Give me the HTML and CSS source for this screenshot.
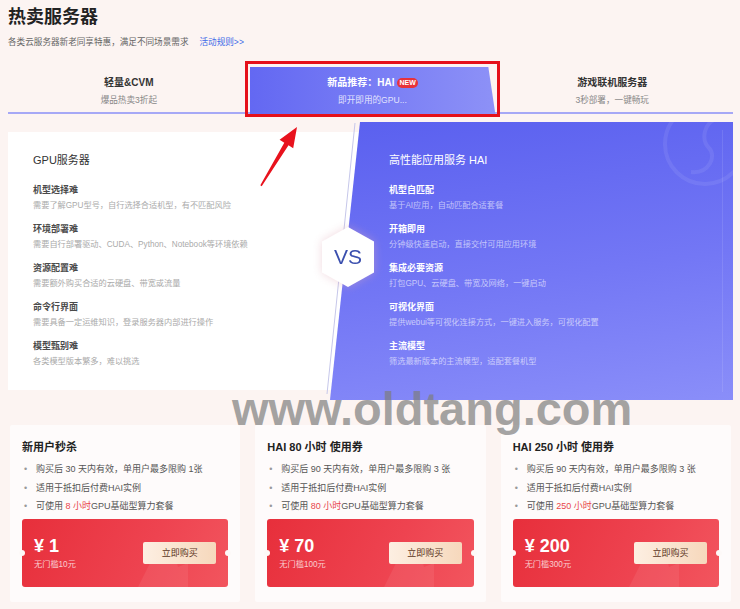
FILE: index.html
```html
<!DOCTYPE html>
<html lang="zh-CN">
<head>
<meta charset="utf-8">
<title>热卖服务器</title>
<link rel="stylesheet" href="styles.css">
</head>
<body>
<div class="page">
  <header class="head">
    <h1 class="title">热卖服务器</h1>
    <p class="subtitle">各类云服务器新老同享特惠，满足不同场景需求<a class="rule">活动规则&gt;&gt;</a></p>
  </header>

  <nav class="tabs">
    <div class="tab">
      <div class="tab-title">轻量&amp;CVM</div>
      <div class="tab-sub">爆品热卖3折起</div>
    </div>
    <div class="tab tab-active">
      <div class="tab-title">新品推荐：HAI<span class="badge">NEW</span></div>
      <div class="tab-sub">即开即用的GPU...</div>
    </div>
    <div class="tab">
      <div class="tab-title">游戏联机服务器</div>
      <div class="tab-sub">3秒部署，一键畅玩</div>
    </div>
  </nav>

  <section class="compare">
    <div class="panel panel-left">
      <div class="panel-h">GPU服务器</div>
      <ul class="items">
        <li><div class="item-t">机型选择难</div><div class="item-d">需要了解GPU型号，自行选择合适机型，有不匹配风险</div></li>
        <li><div class="item-t">环境部署难</div><div class="item-d">需要自行部署驱动、CUDA、Python、Notebook等环境依赖</div></li>
        <li><div class="item-t">资源配置难</div><div class="item-d">需要额外购买合适的云硬盘、带宽或流量</div></li>
        <li><div class="item-t">命令行界面</div><div class="item-d">需要具备一定运维知识，登录服务器内部进行操作</div></li>
        <li><div class="item-t">模型甄别难</div><div class="item-d">各类模型版本繁多，难以挑选</div></li>
      </ul>
    </div>
    <div class="panel panel-right">
      <svg class="ring" viewBox="0 0 90 80" width="90" height="80">
        <circle cx="62" cy="22" r="40" fill="none" stroke="rgba(255,255,255,0.08)" stroke-width="4"/>
        <path d="M76 -4 C 60 0, 58 18, 66 26 C 74 34, 66 52, 48 50" fill="none" stroke="rgba(255,255,255,0.08)" stroke-width="4"/>
      </svg>
      <div class="panel-h">高性能应用服务 HAI</div>
      <ul class="items">
        <li><div class="item-t">机型自匹配</div><div class="item-d">基于AI应用，自动匹配合适套餐</div></li>
        <li><div class="item-t">开箱即用</div><div class="item-d">分钟级快速启动，直接交付可用应用环境</div></li>
        <li><div class="item-t">集成必要资源</div><div class="item-d">打包GPU、云硬盘、带宽及网络，一键启动</div></li>
        <li><div class="item-t">可视化界面</div><div class="item-d">提供webui等可视化连接方式，一键进入服务，可视化配置</div></li>
        <li><div class="item-t">主流模型</div><div class="item-d">筛选最新版本的主流模型，适配套餐机型</div></li>
      </ul>
    </div>
    <svg class="edge-line" width="60" height="278" viewBox="0 0 60 278">
      <line x1="47" y1="1" x2="19" y2="272" stroke="#c6c7ea" stroke-width="1"/>
    </svg>
    <div class="vs-wrap"><div class="vs">VS</div></div>
  </section>

  <section class="cards">
    <div class="card">
      <div class="card-t">新用户秒杀</div>
      <ul class="bullets">
        <li>购买后 30 天内有效，单用户最多限购 1张</li>
        <li>适用于抵扣后付费HAI实例</li>
        <li>可使用 <span class="hl">8 小时</span>GPU基础型算力套餐</li>
      </ul>
      <div class="coupon">
        <svg class="deco" width="60" height="50" viewBox="0 0 60 50"><path d="M10 50 L28 14 L34 22 L44 4 L50 30 L60 26 L60 50 Z" fill="rgba(255,255,255,0.07)"/></svg>
        <div class="price-box">
          <div class="price">¥ 1</div>
          <div class="cond">无门槛10元</div>
        </div>
        <div class="buy">立即购买</div>
      </div>
    </div>
    <div class="card">
      <div class="card-t">HAI 80 小时 使用券</div>
      <ul class="bullets">
        <li>购买后 90 天内有效，单用户最多限购 3 张</li>
        <li>适用于抵扣后付费HAI实例</li>
        <li>可使用 <span class="hl">80 小时</span>GPU基础型算力套餐</li>
      </ul>
      <div class="coupon">
        <svg class="deco" width="60" height="50" viewBox="0 0 60 50"><path d="M10 50 L28 14 L34 22 L44 4 L50 30 L60 26 L60 50 Z" fill="rgba(255,255,255,0.07)"/></svg>
        <div class="price-box">
          <div class="price">¥ 70</div>
          <div class="cond">无门槛100元</div>
        </div>
        <div class="buy">立即购买</div>
      </div>
    </div>
    <div class="card">
      <div class="card-t">HAI 250 小时 使用券</div>
      <ul class="bullets">
        <li>购买后 90 天内有效，单用户最多限购 3 张</li>
        <li>适用于抵扣后付费HAI实例</li>
        <li>可使用 <span class="hl">250 小时</span>GPU基础型算力套餐</li>
      </ul>
      <div class="coupon">
        <svg class="deco" width="60" height="50" viewBox="0 0 60 50"><path d="M10 50 L28 14 L34 22 L44 4 L50 30 L60 26 L60 50 Z" fill="rgba(255,255,255,0.07)"/></svg>
        <div class="price-box">
          <div class="price">¥ 200</div>
          <div class="cond">无门槛300元</div>
        </div>
        <div class="buy">立即购买</div>
      </div>
    </div>
  </section>

  <div class="watermark">www.oldtang.com</div>
  <div class="annot-box"></div>
  <svg class="annot-arrow" width="740" height="609" viewBox="0 0 740 609">
    <polygon points="297,127 279.6,139.8 284.3,142.7 260.3,185.3 261.7,186.2 288.5,145.3 293.2,148.2" fill="#e8121d"/>
  </svg>
</div>
</body>
</html>
```

FILE: styles.css
```css
* { box-sizing: border-box; }

body {
  margin: 0;
  background: #fcf4f2;
  font-family: "Liberation Sans", "Noto Sans CJK SC", sans-serif;
  color: #333;
}

.page {
  position: relative;
  width: 740px;
  height: 609px;
  padding: 0 7px 0 8px;
  overflow: hidden;
}

/* header */
.title {
  margin: 0;
  padding-top: 6px;
  font-size: 18px;
  line-height: 22px;
  font-weight: 700;
  color: #222;
}
.subtitle {
  margin: 8px 0 0;
  font-size: 8.6px;
  line-height: 12px;
  color: #666;
}
.rule {
  margin-left: 11px;
  color: #3d6ae8;
}

/* tabs */
.tabs {
  display: grid;
  grid-template-columns: repeat(3, 1fr);
  margin-top: 16px;
  height: 50px;
  border-bottom: 2px solid #a6a8f6;
}
.tab {
  text-align: center;
  padding-top: 11px;
}
.tab-title {
  font-size: 10px;
  line-height: 16px;
  font-weight: 700;
  color: #333;
}
.tab-sub {
  margin-top: 3px;
  font-size: 8.6px;
  line-height: 12px;
  color: #888;
}
.tab-active {
  margin: 3px -4px -2px 0;
  padding-top: 8px;
  background: linear-gradient(90deg, #6368f2 0%, #8d91f7 100%);
  clip-path: polygon(0 0, calc(100% - 7px) 0, 100% 100%, 0 100%);
}
.tab-active .tab-title { color: #fff; }
.tab-active .tab-sub { color: rgba(255, 255, 255, 0.8); }
.badge {
  display: inline-block;
  margin-left: 3px;
  padding: 0 2px;
  border-radius: 5px;
  background: #e8323a;
  color: #fff;
  font-size: 7px;
  line-height: 10px;
  font-weight: 700;
  vertical-align: 1px;
}

/* compare */
.compare {
  position: relative;
  display: flex;
  margin-top: 8px;
  height: 278px;
}
.panel-left {
  width: 352px;
  flex: none;
  margin: 10px 0;
  padding: 20px 0 0 25px;
  background: #fff;
}
.panel-right {
  position: relative;
  flex: 1;
  margin-left: -30px;
  padding: 30px 0 0 59px;
  background: linear-gradient(172deg, #5a60ef 0%, #7377f5 55%, #8a8ef9 100%);
  clip-path: polygon(30px 0, 100% 0, 100% 100%, 0 100%);
  color: #fff;
}
.panel-right::after {
  content: "";
  position: absolute;
  left: 40px;
  right: 10px;
  top: 8px;
  bottom: 8px;
  border-right: 1px solid rgba(255, 255, 255, 0.1);
}
.ring {
  position: absolute;
  right: 0;
  top: 0;
}
.panel-h {
  font-size: 11px;
  line-height: 16px;
  color: #333;
}
.panel-right .panel-h { color: #fff; }
.items {
  margin: 15px 0 0;
  padding: 0;
  list-style: none;
  display: flex;
  flex-direction: column;
  gap: 10px;
}
.item-t {
  font-size: 9px;
  line-height: 14px;
  font-weight: 700;
  color: #4a4a4a;
}
.item-d {
  margin-top: 3px;
  font-size: 8.2px;
  line-height: 12px;
  color: #aaa;
}
.panel-right .item-t { color: #fff; }
.panel-right .item-d { color: rgba(255, 255, 255, 0.6); }

.edge-line {
  position: absolute;
  left: 300px;
  top: 0;
}
.vs-wrap {
  position: absolute;
  left: 314px;
  top: 105px;
  filter: drop-shadow(0 0 5px rgba(225, 170, 185, 0.45));
}
.vs {
  width: 52px;
  height: 60px;
  background: #fff;
  clip-path: polygon(50% 0, 100% 24%, 100% 76%, 50% 100%, 0 76%, 0 24%);
  display: flex;
  align-items: center;
  justify-content: center;
  font-size: 21px;
  color: #3a4fae;
  font-family: "Liberation Sans", sans-serif;
}

/* cards */
.cards {
  display: grid;
  grid-template-columns: repeat(3, 1fr);
  gap: 15px;
  margin-top: 25px;
  padding: 0 2px;
}
.card {
  height: 177px;
  padding: 13px 12px 0;
  background: rgba(255, 255, 255, 0.65);
  border-radius: 2px;
}
.card-t {
  font-size: 11px;
  line-height: 18px;
  font-weight: 700;
  color: #222;
}
.bullets {
  margin: 4px 0 0;
  padding: 0;
  list-style: none;
}
.bullets li {
  position: relative;
  padding-left: 14px;
  font-size: 9px;
  line-height: 18.5px;
  color: #555;
}
.bullets li::before {
  content: "•";
  position: absolute;
  left: 2px;
  color: #999;
}
.hl { color: #e8454a; }

.coupon {
  position: relative;
  margin-top: 3px;
  height: 68px;
  padding: 0 12px;
  display: flex;
  align-items: center;
  justify-content: space-between;
  border-radius: 3px;
  background: linear-gradient(115deg, #e72f3b 0%, #ee4350 60%, #f2555e 100%);
}
.coupon::before,
.coupon::after {
  content: "";
  position: absolute;
  top: 50%;
  width: 6px;
  height: 6px;
  margin-top: -3px;
  border-radius: 50%;
  background: #fdf9f8;
}
.coupon::before { left: -3px; }
.coupon::after { right: -3px; }
.deco {
  position: absolute;
  right: 40px;
  bottom: 0;
}
.price-box { position: relative; }
.price {
  font-size: 18px;
  line-height: 22px;
  font-weight: 700;
  color: #fff;
}
.cond {
  margin-top: 2px;
  font-size: 8.2px;
  line-height: 12px;
  color: rgba(255, 255, 255, 0.75);
}
.buy {
  position: relative;
  width: 73px;
  height: 22px;
  border-radius: 2px;
  background: linear-gradient(90deg, #fdefe2 0%, #f6d8bc 100%);
  color: #5a3522;
  font-size: 9px;
  line-height: 22px;
  text-align: center;
}

/* overlays */
.watermark {
  position: absolute;
  left: 232px;
  top: 385px;
  font-family: "Liberation Sans", sans-serif;
  font-size: 47px;
  line-height: 47px;
  font-weight: 700;
  color: rgba(125, 125, 125, 0.7);
  white-space: nowrap;
}
.annot-box {
  position: absolute;
  left: 245px;
  top: 61px;
  width: 255px;
  height: 56px;
  border: 3px solid #e5101a;
}
.annot-arrow {
  position: absolute;
  left: 0;
  top: 0;
  pointer-events: none;
}
```
